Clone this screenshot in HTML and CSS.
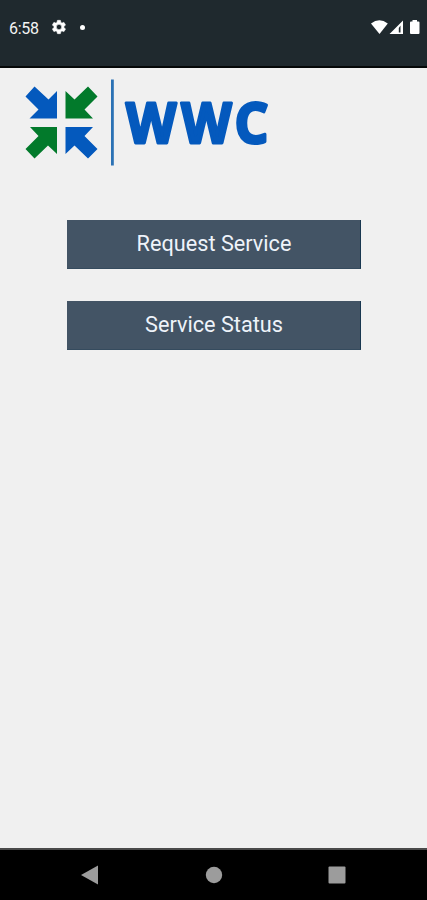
FILE: index.html
```html
<!DOCTYPE html>
<html lang="en">
<head>
<meta charset="utf-8">
<title>WWC</title>
<link rel="stylesheet" href="styles.css">
</head>
<body>
<header class="status">
  <span class="time">6:58</span>
  <svg class="gear" width="16" height="16" viewBox="0 0 24 24"><path fill="#fff" stroke="#fff" stroke-width=".8" fill-rule="evenodd" d="M19.4 13a7 7 0 0 0 0-2l2.1-1.6c.2-.2.3-.4.1-.7l-2-3.4c-.1-.2-.4-.3-.6-.2l-2.5 1a7 7 0 0 0-1.7-1l-.4-2.6c0-.3-.2-.5-.5-.5h-4c-.3 0-.5.2-.5.5L9 5.100a7 7 0 0 0-1.700 1l-2.500-1c-.2-.1-.5 0-.6.2l-2 3.400c-.1.300 0 .5.1.7L4.500 11a7 7 0 0 0 0 2l-2.200 1.600c-.1.2-.2.4-.1.700l2 3.400c.1.200.4.300.6.200l2.500-1a7 7 0 0 0 1.700 1l.4 2.600c0 .3.2.5.5.5h4c.3 0 .5-.2.5-.5l.4-2.600a7 7 0 0 0 1.700-1l2.500 1c.2.100.5 0 .6-.2l2-3.400c.2-.3.100-.5-.1-.7zM12 16a4 4 0 1 1 0-8 4 4 0 0 1 0 8z"/></svg>
  <span class="dot"></span>
  <svg class="signals" width="52" height="18" viewBox="370 18 52 18">
    <path fill="#fff" d="M371 23.500Q379.300 17 387.800 23.500L379.500 34Z"/>
    <path fill="#fff" fill-rule="evenodd" d="M403 20.500V34H389.500ZM400.500 25.500L398.800 28V32.500H400.500Z"/>
    <path fill="#fff" d="M412.500 20h4.500v1.500h1.500q1 0 1 1V33q0 1-1 1H411q-1 0-1-1V22.500q0-1 1-1h1.500z"/>
  </svg>
</header>
<main class="content">
  <svg class="logo" width="260" height="100" viewBox="20 73 260 100" role="img" aria-label="WWC">
    <path fill="#0459bd" d="M34.500 86.500L48.500 99.500L57 91V118.500H29.500L38.500 109.500L25.500 96.500Z"/>
    <path fill="#027a2b" d="M88 86.500L97.500 96.500L84.500 109.500L93 118.500H65.500V91L74.500 99.500Z"/>
    <path fill="#027a2b" d="M30 127H57V154L48 145.500L34.500 158.500L25.500 149L38.500 136Z"/>
    <path fill="#0459bd" d="M65.500 127H93L84.500 136L97.500 149L88 158.500L74.500 145.500L65.500 154Z"/>
    <rect x="111" y="79.500" width="2.800" height="86" fill="#2b72b5"/>
    <text class="brand" transform="translate(126 142.500) scale(.93 1)" x="0 59.500 117" y="0">WWC</text>
  </svg>
  <nav class="actions">
    <button class="action">Request Service</button>
    <button class="action">Service Status</button>
  </nav>
</main>
<footer class="navbar">
  <svg width="18" height="20" viewBox="0 0 18 20"><path fill="#9c9c9c" d="M0 10L17 .5V19.500Z"/></svg>
  <svg width="18" height="18" viewBox="0 0 18 18"><circle cx="9" cy="9" r="8.200" fill="#9c9c9c"/></svg>
  <svg width="18" height="18" viewBox="0 0 18 18"><rect x=".5" y=".5" width="17" height="17" rx="1" fill="#9c9c9c"/></svg>
</footer>
</body>
</html>
```
FILE: styles.css
```css
* { box-sizing: border-box; }
body {
  margin: 0;
  height: 900px;
  display: flex;
  flex-direction: column;
  background: #f0f0f0;
  font-family: Roboto, sans-serif;
  overflow: hidden;
}
.status {
  height: 68px;
  flex: none;
  display: flex;
  align-items: flex-start;
  padding: 18px 5px 0 9px;
  background: #1f292e;
  border-bottom: 2px solid #050808;
  color: #f4f4f4;
}
.time { width: 41.500px; font-size: 16px; line-height: 21px; letter-spacing: -0.3px; }
.gear { margin-top: 1px; }
.dot { width: 5px; height: 5px; margin: 7px 0 0 13.500px; border-radius: 50%; background: #fff; }
.signals { margin-left: auto; }
.content { flex: 1; padding-top: 5px; }
.logo { display: block; margin-left: 20px; }
.brand {
  font-family: "Noto Sans", sans-serif;
  font-weight: 700;
  font-size: 56px;
  fill: #0459bd;
  stroke: #0459bd;
  stroke-width: 3;
  stroke-linejoin: round;
}
.actions {
  display: flex;
  flex-direction: column;
  gap: 32px;
  margin: 47px 66px 0 67px;
}
.action {
  height: 49px;
  padding: 0 0 0 1px;
  border: 0;
  border-right: 1px solid #193750;
  border-bottom: 1px solid #354b5e;
  background: #435465;
  color: #eef3fa;
  font: 400 21.700px/28px Roboto, sans-serif;
}
.navbar {
  height: 52px;
  flex: none;
  display: flex;
  align-items: center;
  justify-content: space-between;
  padding: 0 81px 0 81px;
  border-top: 2px solid #4a4a4a;
  background: #000;
}
```
